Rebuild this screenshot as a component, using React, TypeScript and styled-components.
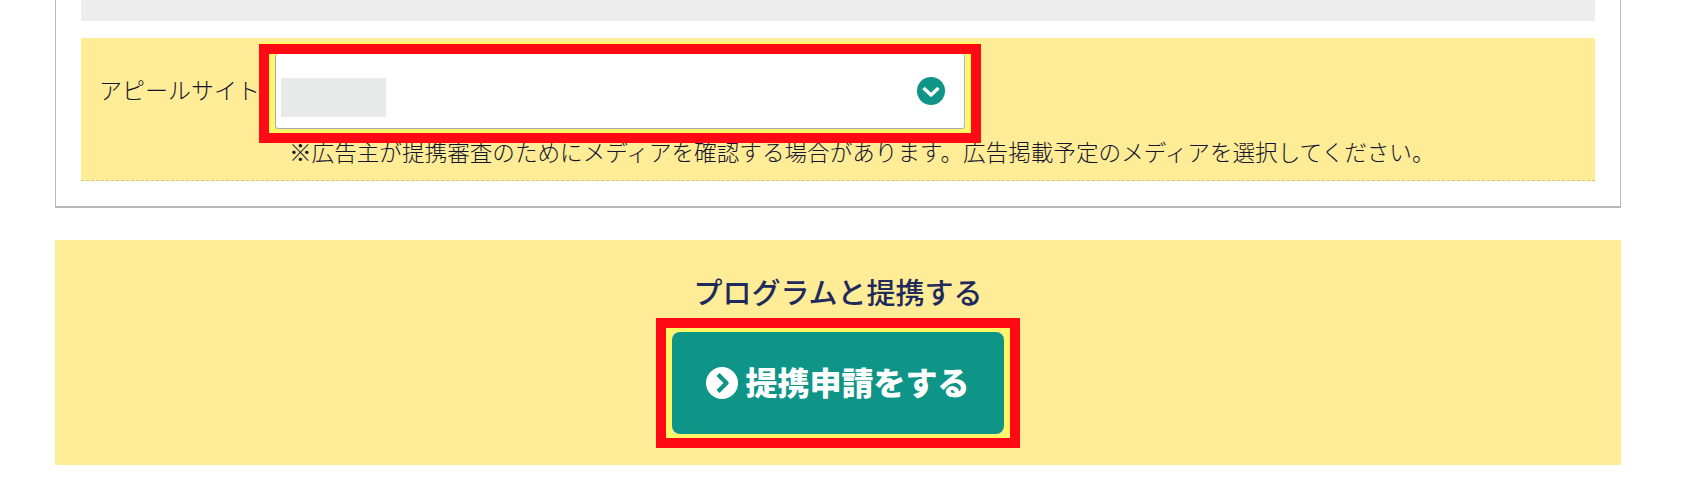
import React from "react";
import styled, { createGlobalStyle } from "styled-components";

const colors = {
  yellow: "#feec96",
  teal: "#0f9488",
  red: "#ff0a14",
  glow: "#fff765",
  text: "#14142e",
  navy: "#1f2a5c",
};

const GlobalStyle = createGlobalStyle`
  html, body {
    margin: 0;
    padding: 0;
    background: #ffffff;
  }
  body {
    font-family: "Noto Sans CJK JP", "Noto Sans", sans-serif;
  }
`;

const App = () => {
  return (
    <Page>
      <GlobalStyle />
      <FormCard>
        <GrayBar />
        <FormRow>
          <FieldLine>
            <FieldLabel>アピールサイト</FieldLabel>
            <SelectBox>
              <MaskedValue />
              <ChevronCircle viewBox="0 0 28 28">
                <circle cx="14" cy="14" r="14" fill={colors.teal} />
                <path d="M6.5 11 L14 18 L21.5 11" fill="none" stroke="#fff" strokeWidth="3.4" strokeLinejoin="round" />
              </ChevronCircle>
            </SelectBox>
          </FieldLine>
          <Note>※広告主が提携審査のためにメディアを確認する場合があります。広告掲載予定のメディアを選択してください。</Note>
        </FormRow>
      </FormCard>
      <ActionPanel>
        <ActionTitle>プログラムと提携する</ActionTitle>
        <ApplyButton>
          <ArrowCircle viewBox="0 0 32 32">
            <circle cx="16" cy="16" r="16" fill="#fff" />
            <path d="M12 7.5 L20.5 16 L12 24.5" fill="none" stroke={colors.teal} strokeWidth="4.4" strokeLinejoin="round" />
          </ArrowCircle>
          <ButtonLabel>提携申請をする</ButtonLabel>
        </ApplyButton>
      </ActionPanel>
    </Page>
  );
};

const Page = styled.div`
  width: 1566px;
  height: 484px;
  margin-left: 55px;
  padding-right: 63px;
  overflow: hidden;
`;

const FormCard = styled.div`
  box-sizing: border-box;
  height: 208px;
  padding: 0 25px;
  border: 1px solid #b8b8bc;
  border-top: none;
  border-bottom-width: 2px;
`;

const GrayBar = styled.div`
  height: 21px;
  background: #ecedec;
`;

const FormRow = styled.div`
  isolation: isolate;
  box-sizing: border-box;
  height: 143px;
  margin-top: 17px;
  padding: 16px 0 0 18px;
  background: ${colors.yellow};
  border-bottom: 1px dashed #d8c878;
`;

const FieldLine = styled.div`
  display: flex;
  align-items: flex-start;
`;

const FieldLabel = styled.div`
  width: 176px;
  font-size: 23px;
  line-height: 71px;
  font-weight: 300;
  color: ${colors.text};
  white-space: nowrap;
`;

const SelectBox = styled.div`
  position: relative;
  box-sizing: border-box;
  display: flex;
  align-items: center;
  justify-content: space-between;
  width: 690px;
  height: 75px;
  padding: 0 19px 0 5px;
  background: #ffffff;
  border-radius: 3px;
  border-right: 1px solid #b4b4d0;
  border-bottom: 1px solid #a8a8b8;
  border-left: 1px solid #a8a8b8;

  &::after {
    content: "";
    position: absolute;
    inset: -10px -17px -15px;
    border: 10px solid ${colors.red};
    box-shadow: 0 -2px 0 ${colors.glow};
    pointer-events: none;
  }

  &::before {
    content: "";
    position: absolute;
    inset: 0 -8px -6px;
    z-index: -1;
    background: ${colors.glow};
  }
`;

const MaskedValue = styled.div`
  width: 105px;
  height: 39px;
  margin-top: 13px;
  background: #e8e9e9;
`;

const ChevronCircle = styled.svg`
  width: 28px;
  height: 28px;
`;

const Note = styled.div`
  margin: 7px 0 0 190px;
  font-size: 22.6px;
  line-height: 32px;
  font-weight: 300;
  color: ${colors.text};
  white-space: nowrap;
`;

const ActionPanel = styled.div`
  box-sizing: border-box;
  display: flex;
  flex-direction: column;
  align-items: center;
  height: 225px;
  margin-top: 32px;
  padding-top: 30px;
  background: ${colors.yellow};
`;

const ActionTitle = styled.div`
  font-size: 29px;
  line-height: 42px;
  font-weight: 500;
  color: ${colors.navy};
`;

const ApplyButton = styled.div`
  position: relative;
  box-sizing: border-box;
  display: flex;
  align-items: center;
  justify-content: center;
  gap: 7px;
  width: 332px;
  height: 102px;
  margin-top: 20px;
  background: ${colors.teal};
  border-radius: 8px;
  color: #ffffff;
  font-size: 32px;
  font-weight: 900;

  &::after {
    content: "";
    position: absolute;
    inset: -14px -16px;
    border: 10px solid ${colors.red};
    box-shadow: inset 0 0 0 4px ${colors.glow}, inset 6px 0 0 ${colors.glow}, inset -6px 0 0 ${colors.glow};
    pointer-events: none;
  }
`;

const ButtonLabel = styled.span`
  margin-top: -5px;
`;

const ArrowCircle = styled.svg`
  width: 32px;
  height: 32px;
`;

export default App;
